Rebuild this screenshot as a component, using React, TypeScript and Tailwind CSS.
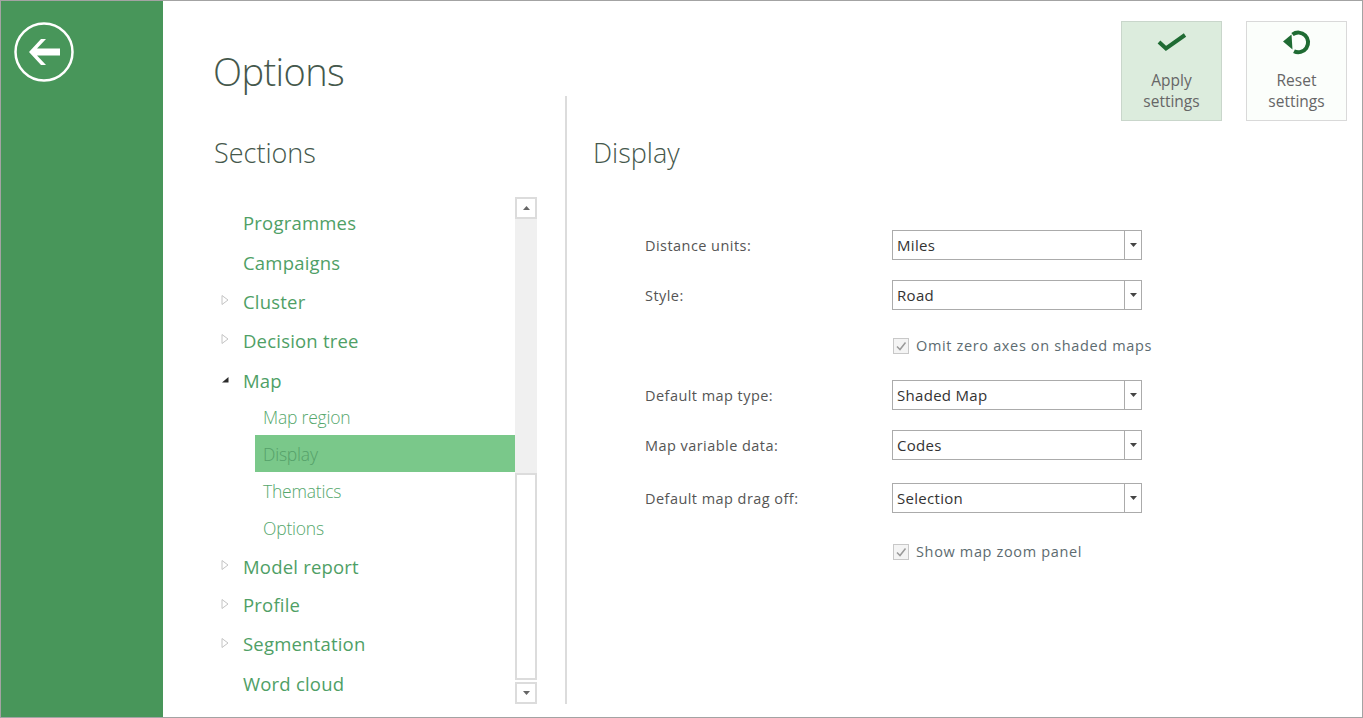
import React from 'react';

const font = "font-['Open_Sans',sans-serif]";

function TreeArrow({ open }: { open?: boolean }) {
  if (open) {
    return (
      <svg width="10" height="10" viewBox="0 0 10 10" className="block">
        <path d="M8.5 2 L8.5 7.5 L2 7.5 Z" fill="#2b2b2b" />
      </svg>
    );
  }
  return (
    <svg width="10" height="12" viewBox="0 0 10 12" className="block">
      <path d="M2 1.5 L8 6 L2 10.5 Z" fill="#fff" stroke="#c4c4c4" strokeWidth="1" />
    </svg>
  );
}

function TreeItem({ label, arrow, open, h }: { label: string; arrow?: boolean; open?: boolean; h: string }) {
  return (
    <div className={`flex items-center text-[18.5px] text-[#4f9f66] ${h}`}>
      <div className="w-[29px] flex justify-end pr-[13px] -mt-[3px]">{arrow ? <TreeArrow open={open} /> : null}</div>
      <span className="tracking-[0.2px]">{label}</span>
    </div>
  );
}

function SubItem({ label, selected }: { label: string; selected?: boolean }) {
  return (
    <div
      className={`ml-[41px] h-[37px] pl-[8px] pt-[2px] flex items-center text-[17.5px] font-light tracking-[-0.2px] ${
        selected ? 'bg-[#7ac88a] text-[#55a069]' : 'text-[#55a76c]'
      }`}
    >
      {label}
    </div>
  );
}

function ScrollArrow({ up }: { up?: boolean }) {
  return (
    <div className="h-[22px] border-2 border-[#dcdcdc] bg-white flex items-center justify-center">
      <svg width="7" height="4" viewBox="0 0 7 4">
        <path d={up ? 'M3.5 0 L7 4 L0 4 Z' : 'M0 0 L7 0 L3.5 4 Z'} fill="#666" />
      </svg>
    </div>
  );
}

function SelectBox({ value }: { value: string }) {
  return (
    <div className="w-[250px] h-[30px] shrink-0 border border-[#ababab] bg-white flex items-stretch">
      <div className="flex-1 pl-[4px] flex items-center text-[15px] tracking-[0.3px] text-[#333]">{value}</div>
      <div className="w-[17px] border-l border-[#ababab] flex items-center justify-center">
        <svg width="7" height="4" viewBox="0 0 7 4">
          <path d="M0 0 L7 0 L3.5 4 Z" fill="#444" />
        </svg>
      </div>
    </div>
  );
}

function FormRow({ label, value, className }: { label: string; value: string; className?: string }) {
  return (
    <div className={`flex items-center h-[30px] ${className ?? ''}`}>
      <div className="w-[247px] shrink-0 pt-[2px] text-[14.5px] tracking-[0.45px] text-[#555]">{label}</div>
      <SelectBox value={value} />
    </div>
  );
}

function CheckRow({ label, className }: { label: string; className?: string }) {
  return (
    <div className={`flex items-center h-[30px] pl-[247px] ${className ?? ''}`}>
      <div className="w-[16px] h-[16px] shrink-0 ml-px border border-[#c8c8c8] bg-[#f4f4f4] flex items-center justify-center">
        <svg width="12" height="12" viewBox="0 0 12 12">
          <path d="M2 6.5 L5 9.5 L10.5 2.5" fill="none" stroke="#9a9a9a" strokeWidth="1.5" />
        </svg>
      </div>
      <span className="ml-[7px] whitespace-nowrap text-[14.5px] tracking-[0.65px] text-[#5d6b70]">{label}</span>
    </div>
  );
}

function ActionButton({ lines, icon, active }: { lines: string[]; icon: React.ReactNode; active?: boolean }) {
  return (
    <div
      className={`w-[101px] h-[100px] border flex flex-col items-center ${
        active ? 'bg-[#dcecdd] border-[#c9d6cb]' : 'bg-[#fbfefb] border-[#d9d9d9]'
      }`}
    >
      <div className="h-[40px] mb-[8px] flex items-center justify-center">{icon}</div>
      <div className="text-[15.5px] leading-[21px] text-[#666] text-center">
        {lines.map((l) => (
          <div key={l}>{l}</div>
        ))}
      </div>
    </div>
  );
}

export default function App() {
  return (
    <div className={`w-[1363px] h-[718px] overflow-hidden flex border border-[#a3a3a3] bg-white ${font}`}>
      {/* Back rail */}
      <div className="w-[162px] bg-[#48965a] pl-[13px] pt-[21px] shrink-0">
        <svg width="60" height="60" viewBox="0 0 60 60" className="block">
          <circle cx="30" cy="30" r="28.5" fill="none" stroke="#fff" strokeWidth="2.5" />
          <path d="M15 30 L27 17 L32 17 L23 26.5 L46 26.5 L46 33.5 L23 33.5 L32 43 L27 43 Z" fill="#fff" />
        </svg>
      </div>

      {/* Left column */}
      <div className="w-[402px] shrink-0 pl-[51px]">
        <div className="h-[96px] pt-[45px] -ml-px text-[38px] leading-[50px] font-light text-[#45584c] tracking-[-0.6px]">
          Options
        </div>
        <div className="h-[100px] pt-[36px] text-[27px] leading-[40px] font-light text-[#45584c]">Sections</div>
        <div className="flex w-[323px] h-[507px]">
          <div className="w-[301px] pt-[6px]">
            <TreeItem label="Programmes" h="h-[39px]" />
            <TreeItem label="Campaigns" h="h-[40px] pt-[2px]" />
            <TreeItem label="Cluster" arrow h="h-[39px]" />
            <TreeItem label="Decision tree" arrow h="h-[39px]" />
            <TreeItem label="Map" arrow open h="h-[38px] pt-[4px]" />
            <SubItem label="Map region" />
            <SubItem label="Display" selected />
            <SubItem label="Thematics" />
            <SubItem label="Options" />
            <TreeItem label="Model report" arrow h="h-[39px] pt-[2px]" />
            <TreeItem label="Profile" arrow h="h-[40px]" />
            <TreeItem label="Segmentation" arrow h="h-[38px]" />
            <TreeItem label="Word cloud" h="h-[41px] pt-[1px]" />
          </div>
          <div className="w-[22px] flex flex-col">
            <ScrollArrow up />
            <div className="h-[255px] bg-[#f0f0f0]" />
            <div className="h-[207px] border-2 border-[#dcdcdc] bg-white" />
            <div className="h-[2px]" />
            <ScrollArrow />
          </div>
        </div>
      </div>

      {/* Right pane */}
      <div className="flex-1 min-w-0 flex items-start">
        <div className="flex-1 min-w-0 mt-[95px] h-[608px] border-l-2 border-[#dcdcdc] pl-[26px] pt-[37px]">
          <div className="text-[27px] leading-[40px] font-light text-[#45584c]">Display</div>
          <div className="mt-[57px] pl-[52px] w-[560px]">
            <FormRow label="Distance units:" value="Miles" />
            <FormRow label="Style:" value="Road" className="mt-[20px]" />
            <CheckRow label="Omit zero axes on shaded maps" className="mt-[21px]" />
            <FormRow label="Default map type:" value="Shaded Map" className="mt-[19px]" />
            <FormRow label="Map variable data:" value="Codes" className="mt-[20px]" />
            <FormRow label="Default map drag off:" value="Selection" className="mt-[23px]" />
            <CheckRow label="Show map zoom panel" className="mt-[24px]" />
          </div>
        </div>
        <div className="shrink-0 mt-[20px] mr-[15px] flex gap-[24px]">
          <ActionButton
            active
            lines={['Apply', 'settings']}
            icon={
              <svg width="30" height="20" viewBox="0 0 30 20">
                <path d="M2 10 L9 16.5 L28 3" fill="none" stroke="#1f6b33" strokeWidth="4" />
              </svg>
            }
          />
          <ActionButton
            lines={['Reset', 'settings']}
            icon={
              <svg width="30" height="26" viewBox="0 0 30 26">
                <path d="M10.5 5.5 A9.8 9.8 0 1 1 12 22.2" fill="none" stroke="#1f6b33" strokeWidth="4" />
                <path d="M1 12.5 L9.5 5.5 L10.5 20.5 Z" fill="#1f6b33" />
              </svg>
            }
          />
        </div>
      </div>
    </div>
  );
}
